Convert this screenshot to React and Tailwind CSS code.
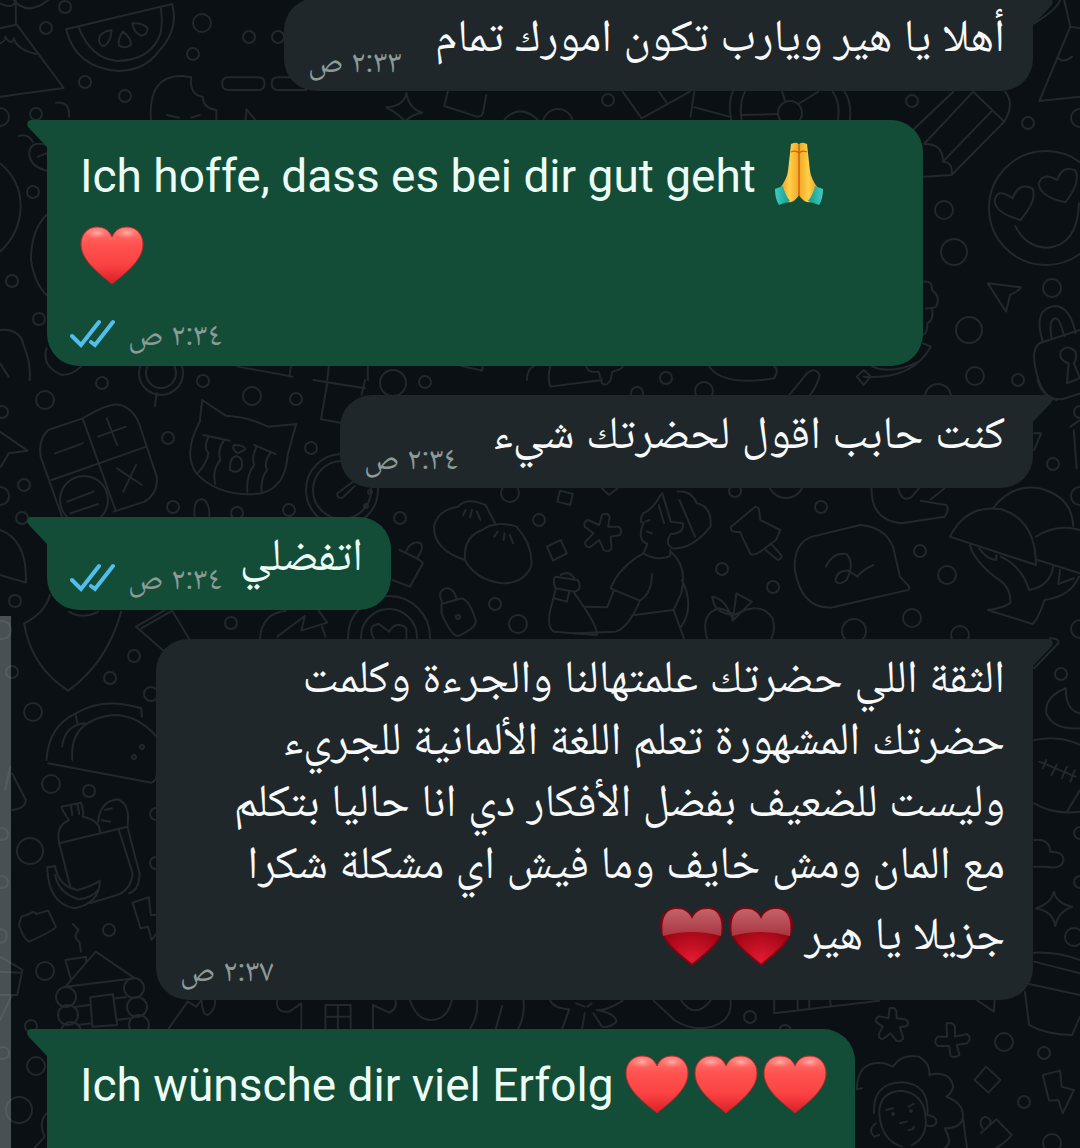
import React from "react";

/* Doodle wallpaper: [x, y, radius] rings, then line drawings grouped by region. */
const RINGS = [
  [65,7,6],[46,28,6],[202,23,9],[249,37,6],[278,37,6],[193,54,6],[85,82,6],[125,96,6],[36,114,6],[0,117,9],[33,192,6],[12,281,6],[39,319,6],
  [608,100,6],[912,101,6],[1028,123,6],[1080,118,9],[944,210,9],[954,252,13],[1052,288,9],[969,330,13],[975,376,9],[1018,380,6],[666,378,6],[558,124,15],[790,113,12],[637,393,6],[704,391,9],[938,397,13],[1046,208,57],
  [45,400,9],[102,383,6],[2,412,6],[252,396,9],[296,399,6],[168,438,6],[311,448,6],[24,485,6],[0,496,9],[22,518,6],[173,507,6],[237,513,6],[289,510,6],[400,518,6],[15,601,6],[231,623,6],[134,656,6],[110,678,6],[33,712,9],[12,672,6],[2,630,9],[495,604,6],[518,624,9],[151,694,7],[393,383,13],[510,493,9],[203,381,6],[539,520,6],[425,382,6],[161,373,22],[161,373,15],[342,490,36],[342,490,29],[84,500,24],[389,637,41],[389,637,28],[458,617,2],[142,747,2],[134,757,2],[370,492,2],[366,506,2],
  [735,491,6],[821,507,6],[722,569,6],[773,587,6],[920,551,6],[947,575,9],[912,618,9],[854,631,12],[960,635,9],[1053,464,6],[1061,674,6],[1080,496,9],[1080,629,9],[1080,412,6],[786,480,18],
  [51,784,9],[89,791,6],[30,851,13],[109,930,6],[45,971,9],[31,1026,6],[36,1066,9],[19,1110,13],[2,834,6],[2,882,6],[0,936,7],[3,1053,6],[156,814,6],[156,863,6],[66,997,10],[68,1015,10],[134,988,10],[137,1007,10],[139,1025,10],[71,1032,10],
  [750,1017,6],[785,1031,6],[1004,1042,9],[1044,1053,6],[1024,1102,6],[1052,1143,9],[1080,833,6],[1080,882,6],[1074,937,9],[893,1114,1],[911,1111,1],
];

const DOODLES = [
  {
    at: "translate(0 0) scale(.3444 .3333)",
    d: [
      "M192 88L500 12Q520 90 460 155Q420 212 345 213Q220 205 192 88ZM228 80Q262 175 340 183Q440 180 466 100Q474 60 466 20",
      "M324 90Q290 95 287 120Q290 138 303 138Q322 125 324 90ZM357 95Q340 120 346 137Q362 148 380 135Q382 115 357 95ZM384 70Q390 100 410 107Q430 105 428 84Q415 68 384 70Z",
      "M0 10Q40 30 46 0M40 0Q80 50 140 0M46 10V70L185 264L0 290M0 85L46 74M0 130Q20 120 15 110Q35 140 40 115Q50 150 105 162",
      "M438 358Q430 225 530 228L555 232Q550 285 588 290Q590 325 628 330V358M485 345L520 353M580 345L555 353M713 358L716 328L740 358",
      "M664 232H750Q768 232 768 251Q768 270 750 270H664Q645 270 645 251Q645 232 664 232ZM808 232H890V270H808Q789 270 789 251Q789 232 808 232Z",
      "M1180 278Q1186 325 1226 338Q1200 342 1180 360M1180 278Q1172 320 1122 322Q1155 340 1172 360M1300 275L1290 318L1385 350Q1400 350 1402 340L1412 285M1465 358Q1510 310 1560 358",
      "M163 308Q205 305 200 350M55 408Q80 400 95 425M135 435Q85 420 85 465Q90 500 135 512M110 470L135 460M0 490Q60 540 60 620Q58 700 0 755M135 645Q90 690 90 780Q100 850 135 885",
      "M0 990Q60 985 70 1040Q90 1090 86 1140M0 1090L25 1130M135 1045Q120 1100 180 1125Q210 1125 235 1100M845 1098L840 1130M955 1098L950 1140M690 1100L850 1130M1068 1098V1140M1340 1098L1400 1112L1402 1098M1530 1140Q1530 1110 1550 1098",
    ],
  },
  {
    at: "translate(540 0) scale(.3444 .3333)",
    d: [
      "M240 275L295 355L435 275M345 275L368 308M448 275L437 350M448 322L550 350",
      "M555 358Q545 310 560 275M585 358Q578 310 595 275M865 358Q873 310 850 275M900 358Q905 310 885 275M585 345L692 342M703 275L712 305M750 312L808 275",
      "M1200 275L1085 388M1258 275L1115 432M1258 275L1348 365M1310 335L1170 485M1348 365L1195 525L1115 530M1350 275Q1380 310 1348 365M1115 432Q1170 430 1170 485Q1200 485 1195 525",
      "M1522 0L1540 80L1450 303L1568 290M1540 80L1568 85M1505 175Q1520 190 1545 170M1435 70Q1500 30 1510 0",
      "M1395 660Q1325 640 1320 605Q1325 560 1372 595Q1390 545 1430 565Q1445 600 1395 660ZM1525 607Q1450 590 1448 550Q1460 515 1502 540Q1515 495 1555 512Q1570 550 1525 607ZM1380 678Q1410 740 1470 743Q1560 740 1565 610",
      "M1300 850L1395 862Q1400 866 1365 885L1353 935Z",
      "M1460 1025Q1430 925 1495 918Q1540 920 1555 1000M1485 1012Q1475 955 1500 955Q1510 960 1522 1008M1568 990L1450 1030Q1425 1050 1440 1110Q1455 1190 1500 1200M1530 1150L1535 1090Q1505 1080 1512 1055Q1530 1030 1555 1055Q1560 1080 1550 1090L1568 1135M1530 1150L1568 1135",
      "M1112 845Q1140 840 1138 870Q1165 890 1150 920Q1140 925 1120 925M1138 925Q1145 960 1125 970Q1125 1000 1112 1005M1112 1030L1135 1040Q1080 1140 940 1130M1100 1085Q1020 1125 965 1100M920 1130L940 1110L960 1130L940 1155Z",
      "M490 1098Q530 1160 680 1135Q695 1110 680 1100M30 1098Q20 1130 30 1160L180 1140M135 1100Q140 1120 170 1115L180 1150Q195 1160 205 1140L210 1115Q235 1110 240 1100M720 1190L775 1120Q800 1100 812 1125Q805 1160 780 1190",
    ],
  },
  {
    at: "translate(0 380) scale(.3444 .3333)",
    d: [
      "M240 115Q320 65 350 75Q395 90 410 150L455 290Q460 340 420 365L330 395M240 115L140 150Q110 180 118 230L180 410M240 115L335 390M150 300L425 200M160 220L240 190M285 170L365 140M310 115L340 195M340 265L412 315M395 255L358 335M195 365L272 335M205 400L285 372",
      "M587 60L655 107Q720 110 778 140L860 132L835 225Q830 320 760 340Q640 355 570 280Q530 220 580 125ZM590 165L668 182M738 195L800 222M605 172Q590 200 605 220Q600 250 575 278M650 182Q630 210 640 240Q615 270 625 312M745 200Q730 230 738 255Q715 285 718 335M785 218Q765 250 775 270Q755 300 760 340M680 195Q710 195 712 208L690 220Q670 205 680 195M685 228Q705 230 703 260Q690 285 668 270Q665 235 685 228Z",
      "M1025 305L980 340Q975 355 995 353L1030 318M455 40L450 78M950 10L932 118L988 128M910 0L1060 25M1060 0L1050 45M0 155L80 212L25 220Q10 250 0 262M0 450Q80 480 75 608L0 585M565 408Q560 360 585 358Q608 360 608 408",
      "M1350 540Q1260 510 1260 440Q1270 390 1330 380Q1355 350 1410 375L1440 435M1350 540Q1345 470 1400 450Q1440 420 1500 440Q1550 500 1542 560Q1520 610 1460 610Q1380 600 1350 540ZM1345 405L1352 390M1365 412L1370 390M1395 420L1385 395M1435 470L1445 455M1462 480L1465 460M1490 490L1480 465",
      "M1140 600L1190 620L1228 550Q1225 540 1160 510M1180 512Q1195 480 1222 490Q1232 505 1210 535M1282 672L1340 655Q1365 660 1382 725Q1380 745 1330 768Q1310 768 1282 700ZM1285 670Q1265 630 1300 624Q1320 630 1325 655",
      "M145 645Q130 700 70 730Q90 860 198 932Q310 850 352 695M200 695Q240 720 285 695M480 690L395 740L475 812M410 745L500 692L550 778M755 775Q760 700 830 692M885 708L875 752L950 728L925 692M885 708L805 770M935 740L945 770M1085 775Q1065 735 1100 732L1130 755Q1150 720 1180 745V775",
      "M135 1140Q140 1040 220 1000Q300 950 410 985L412 1010M210 1140Q200 1020 330 1005Q400 1005 455 1070M220 1005L225 1030M180 1100Q190 1035 245 1030",
    ],
  },
  {
    at: "translate(540 380) scale(.3444 .3333)",
    d: [
      "M180 405Q195 395 202 410L198 440L228 440Q242 450 232 465L205 470L208 505Q200 520 185 510L172 480L145 502Q128 500 132 485L155 460L130 440Q125 425 140 420L172 435ZM20 500L60 480L78 520L38 542ZM58 332L95 342L88 375L50 365ZM180 325L200 345L225 325",
      "M300 400Q330 385 350 345M300 400Q285 425 300 430Q280 480 312 492L300 520Q340 545 378 528V510M300 520Q230 560 205 625L290 662Q325 640 325 582M380 515Q430 560 410 640L388 690L418 775M215 630L195 682L130 680M290 662Q260 740 220 755L100 760M275 705L385 690M412 600Q450 680 410 740M305 425L318 420M310 455L325 460M345 375L360 430M355 340L380 425L415 430Q420 460 380 462Q360 490 385 505Q440 510 495 440Q500 380 455 370Q440 330 400 335M405 360L450 470",
      "M45 590L110 600Q125 630 100 635L45 625Q35 600 45 590ZM60 585Q85 570 100 595M45 630L35 670Q15 740 40 755L165 765Q170 740 100 640M40 655L78 665L85 635",
      "M625 380L555 440Q550 460 580 455L610 520Q615 530 640 515L685 480L698 450L640 420L635 385ZM655 510L690 540Q705 535 700 525L670 490",
      "M485 775Q465 700 520 685Q540 690 565 705Q640 660 675 715Q685 750 672 775M560 722L570 640L615 665Q590 690 560 722Q540 655 500 650Q505 700 560 705",
      "M1045 590L1072 620Q1075 632 1060 632L850 682Q760 690 740 570Q735 490 790 470L930 435Q1000 440 1025 500ZM830 560Q850 515 890 522Q915 550 890 600Q865 620 857 600Q865 570 895 572L922 590Q935 570 968 555",
      "M963 325Q960 420 1050 430L1175 410Q1190 390 1180 375L1105 362M1040 325Q1050 370 1080 350L1100 325M1175 325L1135 358",
      "M1190 470Q1240 370 1340 388Q1440 420 1440 555ZM1315 385Q1370 310 1450 325Q1545 350 1548 438M1440 470Q1500 430 1568 450M1445 540L1568 580M1248 495Q1260 540 1320 590Q1370 620 1365 670Q1340 685 1300 690L1430 732Q1445 720 1465 660Q1540 650 1565 590M1275 505Q1300 540 1325 540V525M1338 530Q1400 560 1420 630Q1480 620 1490 560M1510 570L1505 612L1550 595",
      "M1435 160H1455L1435 210M1540 140L1568 120M1550 150L1558 265M1435 865L1505 790Q1510 775 1480 775M1527 925Q1465 950 1470 1000Q1490 1050 1568 1045M1527 925Q1525 990 1568 1000M1435 1080Q1510 1065 1568 1095M1445 0Q1460 60 1515 58L1568 40",
    ],
  },
  {
    at: "translate(0 760) scale(.3444 .3333)",
    d: [
      "M172 250Q160 200 200 180Q180 150 178 140L235 128Q245 155 240 170Q290 180 290 215M172 250L370 200Q380 130 340 118Q290 125 285 185M172 250L205 385M345 210L385 340Q380 390 340 405L260 430M370 200L405 340Q405 390 375 400M205 135L210 165M225 132L230 162M305 150L325 145M295 180L320 185",
      "M137 322L160 318Q170 380 225 390Q265 380 290 362Q290 430 215 445Q140 430 137 322ZM160 345Q170 400 230 418Q265 415 285 390",
      "M140 10L440 68Q455 60 455 45M35 40L75 120Q75 145 35 150M30 20L15 90M62 470L85 462Q100 450 105 462L140 452L162 500Q160 510 85 545Q70 540 55 495ZM212 492L228 510Q210 530 230 545L235 575M385 428L432 412L438 465H455M385 428L408 505L430 500L440 540L455 520",
      "M190 680L278 575L392 655ZM205 655L190 600L250 590V605M220 740L260 735M225 795L265 790M335 715L365 712M340 780L375 775M262 712L328 703L340 795L268 800ZM0 590L65 630L50 705H0M0 635L62 638M35 705L0 780",
      "M490 805L545 725L570 740L585 720Q590 780 610 760Q625 745 625 720M805 722Q800 760 840 755L875 730V805M945 805V735H1018V805M945 770H1018M981 735V805M1083 805V735L1130 758Q1155 745 1148 722M1190 720Q1210 780 1250 780Q1300 780 1312 720M1385 720Q1390 770 1365 805M1458 738L1440 805M1520 720Q1525 770 1505 805M135 1060Q110 1090 130 1130L100 1164",
    ],
  },
  {
    at: "translate(540 760) scale(.3444 .3333)",
    d: [
      "M30 722Q40 745 85 748L65 805M240 722Q190 755 165 750Q220 760 222 785Q200 805 180 800L155 760M130 760L122 805M105 730L130 740M150 730L138 740M330 722L390 780Q440 815 500 800Q560 780 553 722M410 722Q450 780 495 722M680 722V760L985 722M748 722V750M782 722V745M842 722L845 740M1270 722L1318 755L1320 722",
      "M1015 745Q1030 740 1035 755V775L1060 778Q1075 785 1065 798L1045 802L1055 835Q1045 848 1035 842L1018 820L995 838Q980 835 985 820L995 800L975 785Q975 768 990 770L1012 775ZM1180 790Q1200 785 1205 800V830L1240 822Q1255 835 1240 850L1210 855L1218 885Q1205 895 1192 888L1188 858H1155Q1140 845 1155 830H1182Z",
      "M1295 920L1337 960L1302 998L1262 960ZM1460 945L1510 932L1515 980L1550 990L1518 1060L1505 1020L1478 1022ZM1280 1120L1325 1078L1370 1125Q1350 1150 1325 1164M1285 1105Q1270 1080 1292 1070Q1315 1078 1305 1095",
      "M920 988Q920 900 1000 910L1025 920Q1050 880 1100 890Q1135 910 1130 945Q1190 930 1200 980Q1195 1000 1180 1010Q1230 1030 1228 1070Q1225 1105 1175 1105Q1200 1150 1175 1164M920 988L935 985M970 1060Q965 970 1050 967Q1130 970 1125 1060M985 1060Q985 995 1050 992Q1110 1000 1118 1060M985 1060Q990 1140 1050 1160M1118 1060Q1130 1130 1080 1155M1125 1065Q1155 1070 1150 1090Q1140 1105 1120 1095M975 1090Q950 1110 970 1130L985 1125M1005 1050L1025 1045M1070 1040L1085 1032M1045 1090L1065 1085M1070 1110Q1085 1110 1085 1100M1228 1075L1240 1164",
      "M1435 578Q1500 575 1568 600M1435 605L1568 640M1420 672L1568 705M1408 695L1420 795Q1470 825 1545 825L1568 770",
      "M1492 395Q1500 430 1545 440Q1505 455 1496 498Q1490 455 1440 445Q1485 430 1492 395ZM1435 240Q1480 235 1482 275Q1520 275 1520 300Q1515 330 1470 320H1435M1435 130Q1490 165 1568 155M1450 5L1555 50M1470 0L1460 25M1500 15L1485 45M1530 20L1515 55M1553 30L1540 65M1530 155L1568 90",
    ],
  },
];

function Wallpaper() {
  return (
    <svg
      aria-hidden="true"
      viewBox="0 0 1080 1148"
      preserveAspectRatio="xMidYMin slice"
      className="absolute inset-0 -z-10 h-full w-full fill-none stroke-[#22282c] stroke-2"
      strokeLinecap="round"
      strokeLinejoin="round"
    >
      {RINGS.map(([x, y, r]) => (
        <circle key={`${x}-${y}-${r}`} cx={x} cy={y} r={r} />
      ))}
      {DOODLES.map((group) => (
        <g key={group.at} transform={group.at}>
          {group.d.map((d) => (
            <path key={d} d={d} vectorEffect="non-scaling-stroke" />
          ))}
        </g>
      ))}
    </svg>
  );
}

const HEART = "M32 58C20 48 1 35 1 18C1 8 8 1 17 1C24 1 29 4 32 11C35 4 40 1 47 1C56 1 63 8 63 18C63 35 44 48 32 58Z";

function RedHeart() {
  return (
    <svg role="img" aria-label="❤️" viewBox="0 0 64 59" className="-mt-2 mr-[5px] inline-block h-[59px] w-16 align-middle">
      <defs>
        <linearGradient id="heart-body" x1="0" y1="0" x2="0" y2="1">
          <stop offset="0" stopColor="#ff7b75" />
          <stop offset=".3" stopColor="#ff5350" />
          <stop offset=".65" stopColor="#fb4344" />
          <stop offset="1" stopColor="#dc1f26" />
        </linearGradient>
        <radialGradient id="heart-shine">
          <stop offset="0" stopColor="#ffc4bd" stopOpacity=".8" />
          <stop offset="1" stopColor="#ff8a84" stopOpacity="0" />
        </radialGradient>
      </defs>
      <path d={HEART} fill="url(#heart-body)" stroke="#b92a2b" strokeWidth="1" />
      <ellipse cx="17" cy="7" rx="12" ry="6" fill="url(#heart-shine)" />
      <ellipse cx="47" cy="7" rx="12" ry="6" fill="url(#heart-shine)" />
    </svg>
  );
}

function HeartSuit() {
  return (
    <svg role="img" aria-label="♥️" viewBox="0 0 64 59" className="ml-[5px] inline-block h-[59px] w-16 align-middle">
      <defs>
        <radialGradient id="suit-body" cx=".5" cy=".9" r=".6">
          <stop offset="0" stopColor="#e01a31" />
          <stop offset="1" stopColor="#9c0412" />
        </radialGradient>
        <linearGradient id="suit-gloss" x1="0" y1="0" x2="0" y2="1">
          <stop offset="0" stopColor="#c4626a" />
          <stop offset="1" stopColor="#a83640" />
        </linearGradient>
      </defs>
      <path d={HEART} fill="url(#suit-body)" stroke="#7d0611" strokeWidth="2" />
      <path d="M3 29C1 12 5 2 17 2C24 2 29 5 32 12C35 5 40 2 47 2C59 2 63 12 61 29Q32 21 3 29Z" fill="url(#suit-gloss)" />
    </svg>
  );
}

function FoldedHands() {
  return (
    <svg role="img" aria-label="🙏" viewBox="0 0 64 66" className="-mt-3 inline-block h-[66px] w-16 align-middle">
      <defs>
        <linearGradient id="palm-left" x1="0" x2="1">
          <stop offset="0" stopColor="#f29a1c" />
          <stop offset=".5" stopColor="#ffd04a" />
          <stop offset="1" stopColor="#f5a623" />
        </linearGradient>
        <linearGradient id="cuff" x1="0" x2="1">
          <stop offset="0" stopColor="#3fcbbd" />
          <stop offset="1" stopColor="#129c90" />
        </linearGradient>
      </defs>
      <g id="left-hand">
        <path d="M24 3Q31 0 32 4V54Q27 63 18 61L13 47Q20 38 21 30Z" fill="url(#palm-left)" />
        <path d="M24 11Q29 9 32 12" fill="none" stroke="#c9650b" strokeWidth="1.2" />
        <path d="M8 48L16 45Q18 54 23 60L12 64Q8 58 8 48Z" fill="url(#cuff)" />
      </g>
      <use href="#left-hand" transform="translate(64 0) scale(-1 1)" />
      <path d="M32 4V54" stroke="#c9650b" strokeWidth="1.5" />
    </svg>
  );
}

function ReadTicks() {
  return (
    <svg
      role="img"
      aria-label="Read"
      viewBox="0 0 46 30"
      className="h-[30px] w-[46px] fill-none stroke-[#53bdeb] stroke-[4px]"
    >
      <path d="M2 17L11 26L29 3M21 23L25 26L43 3" strokeLinecap="round" strokeLinejoin="miter" />
    </svg>
  );
}

function Tail({ outgoing }) {
  return (
    <svg
      aria-hidden="true"
      viewBox="0 0 21 28"
      className={
        outgoing
          ? "absolute top-0 -left-5 h-7 w-[21px] fill-[#144d37]"
          : "absolute top-0 -right-5 h-7 w-[21px] -scale-x-100 fill-[#1f272a]"
      }
    >
      <path d="M21 0H4C0 0-1 5 2 8L20 27H21Z" />
    </svg>
  );
}

function Bubble({ outgoing, className, children }) {
  return (
    <article
      className={`relative flex rounded-[32px] ${
        outgoing
          ? "self-start rounded-tl-none bg-[#144d37] text-[#ecfdf5]"
          : "self-end rounded-tr-none bg-[#1f272a] text-[#f7f9fa]"
      } ${className}`}
    >
      <Tail outgoing={outgoing} />
      {children}
    </article>
  );
}

function Meta({ time, read }) {
  return (
    <footer className="flex shrink-0 items-center gap-3 self-end">
      {read && <ReadTicks />}
      <time dir="rtl" className="text-[32px] leading-[40px] whitespace-nowrap text-[#8d9b98]">
        {time}
      </time>
    </footer>
  );
}

export default function App() {
  return (
    <main className="relative isolate flex h-screen flex-col gap-[29px] overflow-hidden bg-[#0a1014] pr-[47px] pl-[47px] text-[46px] leading-[62px] font-[Roboto,'Noto_Naskh_Arabic','Noto_Sans_Arabic','Noto_Sans','DejaVu_Sans',sans-serif]">
      <Wallpaper />

      <Bubble className="-mt-0.5 h-[93px] w-[749px] shrink-0 justify-between pt-[6px] pr-7 pb-[10px] pl-6">
        <Meta time="٢:٣٣ ص" />
        <p dir="rtl" className="whitespace-nowrap">أهلا يا هير ويارب تكون امورك تمام</p>
      </Bubble>

      <Bubble outgoing className="w-[876px] shrink-0 flex-col pt-4 pr-7 pb-3 pl-[33px]">
        <p className="leading-[80px]">
          Ich hoffe, dass es bei dir gut geht <FoldedHands />
          <br />
          <RedHeart />
        </p>
        <div className="-ml-[10px] flex pt-[18px]">
          <Meta time="٢:٣٤ ص" read />
        </div>
      </Bubble>

      <Bubble className="h-[93px] w-[693px] shrink-0 justify-between pt-[6px] pr-7 pb-[10px] pl-6">
        <Meta time="٢:٣٤ ص" />
        <p dir="rtl" className="whitespace-nowrap">كنت حابب اقول لحضرتك شيء</p>
      </Bubble>

      <Bubble outgoing className="h-[93px] w-[344px] shrink-0 justify-between pt-[6px] pr-7 pb-3 pl-[23px]">
        <Meta time="٢:٣٤ ص" read />
        <p dir="rtl" className="whitespace-nowrap">اتفضلي</p>
      </Bubble>

      <Bubble className="h-[361px] w-[877px] shrink-0 justify-between pt-[6px] pr-7 pb-[10px] pl-6">
        <Meta time="٢:٣٧ ص" />
        <p dir="rtl" className="-ml-16 whitespace-nowrap">
          الثقة اللي حضرتك علمتهالنا والجرءة وكلمت
          <br />
          حضرتك المشهورة تعلم اللغة الألمانية للجريء
          <br />
          وليست للضعيف بفضل الأفكار دي انا حاليا بتكلم
          <br />
          مع المان ومش خايف وما فيش اي مشكلة شكرا
          <span className="block leading-[80px]">
            جزيلا يا هير <HeartSuit />
            <HeartSuit />
          </span>
        </p>
      </Bubble>

      <Bubble outgoing className="h-[246px] w-[808px] shrink-0 pt-4 pr-7 pl-[33px]">
        <p className="leading-[80px] whitespace-nowrap">
          Ich wünsche dir viel Erfolg <RedHeart />
          <RedHeart />
          <RedHeart />
        </p>
      </Bubble>

      <div aria-hidden="true" className="absolute top-[616px] bottom-0 left-0 w-[11px] bg-[#879092]/50" />
    </main>
  );
}
